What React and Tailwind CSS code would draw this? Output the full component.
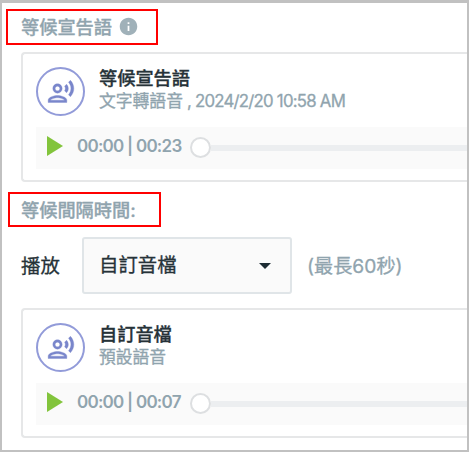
import { MdInfo, MdOutlineRecordVoiceOver } from 'react-icons/md';

const Player = ({ time }) => {
	return (
		<div className="mt-[12px] flex h-[42px] items-center bg-[#fafafa] pl-[11px]">
			<svg className="mb-[5px] h-[20px] w-[16px] shrink-0" viewBox="0 0 16 20">
				<path d="M0 0L16 10L0 20Z" fill="#82c43c" />
			</svg>
			<p className="mb-[3px] ml-[14px] w-[113px] shrink-0 whitespace-nowrap text-[17px] font-semibold tracking-[-0.75px] text-[#90a4ae]">
				{time}
			</p>
			<div className="z-10 mb-[1px] h-[21px] w-[21px] shrink-0 rounded-full border-2 border-[#dddfe1] bg-white" />
			<div className="mb-[1px] h-[6px] grow bg-[#eceef0]" />
		</div>
	);
};

const AudioCard = ({ title, subtitle, date, time }) => {
	return (
		<div className="h-[130px] rounded-l-[4px] border-2 border-r-0 border-[#e6e7e8] pl-[13px] pt-[13px]">
			<div className="flex h-[48px]">
				<div className="flex h-[49px] w-[49px] shrink-0 items-center justify-center rounded-full border-2 border-[#929bd9]">
					<MdOutlineRecordVoiceOver className="h-[28px] w-[28px] stroke-[#7986cb] stroke-[0.3px] text-[#7986cb] [&>path:first-child]:hidden" />
				</div>
				<div className="ml-[14px] whitespace-nowrap">
					<p className="text-[18.2px] font-medium leading-[23px] text-[#263238] [-webkit-text-stroke:0.3px]">
						{title}
					</p>
					<p className="text-[16.8px] leading-[22px] text-[#90a4ae] [-webkit-text-stroke:0.3px]">
						{subtitle}
						{date && <span className="tracking-[-0.76px]"> , {date}</span>}
					</p>
				</div>
			</div>
			<Player time={time} />
		</div>
	);
};

function App() {
	return (
		<div
			lang="zh-Hant"
			className="h-[452px] w-[469px] overflow-hidden border-2 border-t-[3px] border-[#c1c1c1] bg-white font-[Inter,'Noto_Sans_CJK_TC',sans-serif]"
		>
			<div className="ml-[4px] mt-[6px] flex h-[36px] w-[152px] items-center border-2 border-[#ff0000] pl-[13px]">
				<p className="text-[18.2px] font-medium leading-[24px] text-[#90a4ae] [-webkit-text-stroke:0.3px]">
					等候宣告語
				</p>
				<MdInfo className="mb-[2px] ml-[6px] h-[21px] w-[21px] text-[#a0b1b9]" />
			</div>

			<div className="ml-[19px] mt-[7px]">
				<AudioCard
					title="等候宣告語"
					subtitle="文字轉語音"
					date="2024/2/20 10:58 AM"
					time="00:00 | 00:23"
				/>
			</div>

			<div className="ml-[6px] mt-[10px] flex h-[35px] w-[153px] items-center border-2 border-[#ff0000] pl-[11px]">
				<p className="text-[18.2px] font-medium leading-[24px] text-[#90a4ae] [-webkit-text-stroke:0.3px]">
					等候間隔時間:
				</p>
			</div>

			<div className="ml-[19px] mt-[10px] flex items-center whitespace-nowrap">
				<p className="w-[61px] text-[19.4px] leading-[24px] text-[#263238] [-webkit-text-stroke:0.3px]">
					播放
				</p>
				<button className="flex h-[57px] w-[210px] items-center justify-between rounded-[3px] border-2 border-[#e0e5e8] bg-[#fafafa] pl-[15px] pr-[19px] text-[19.4px] text-[#263238] [-webkit-text-stroke:0.3px]">
					自訂音檔
					<svg className="h-[6px] w-[12px]" viewBox="0 0 12 6">
						<path d="M0 0H12L6 6Z" fill="#1c2b33" />
					</svg>
				</button>
				<p className="ml-[15px] text-[19.2px] leading-[24px] text-[#90a4ae] [-webkit-text-stroke:0.3px]">
					(最長60秒)
				</p>
			</div>

			<div className="ml-[19px] mt-[14px]">
				<AudioCard title="自訂音檔" subtitle="預設語音" time="00:00 | 00:07" />
			</div>
		</div>
	);
}

export default App;
